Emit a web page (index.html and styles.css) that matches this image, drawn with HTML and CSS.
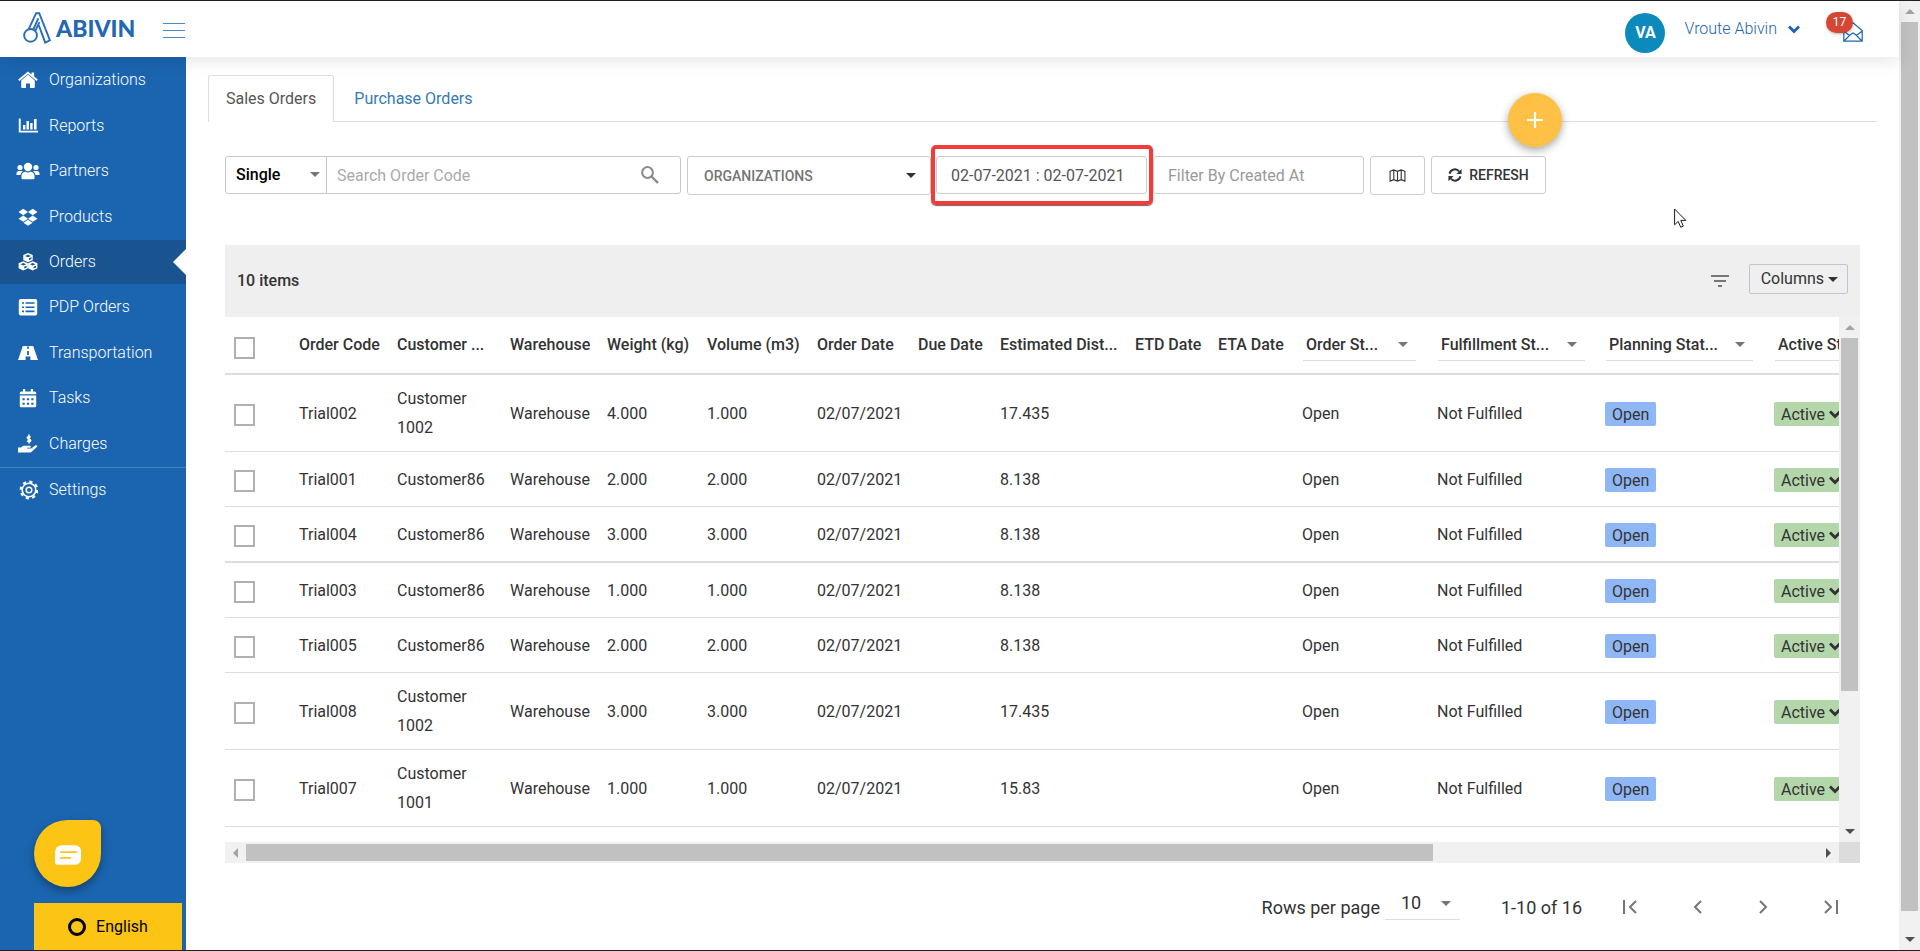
FILE: index.html
```html
<!DOCTYPE html>
<html lang="en">
<head>
<meta charset="utf-8">
<title>Abivin – Sales Orders</title>
<link rel="stylesheet" href="styles.css">
</head>
<body>
<svg class="defs" aria-hidden="true">
  <symbol id="chev" viewBox="0 0 14 10"><path d="M2 2.500l5 5 5-5" fill="none" stroke="currentColor" stroke-width="2.800"/></symbol>
  <symbol id="caret" viewBox="0 0 10 5"><path d="M0 0h10L5 5z" fill="currentColor"/></symbol>
</svg>
<div class="app">
  <div class="page">
    <header class="topbar">
      <a class="logo" href="#" aria-label="Abivin">
        <svg class="logo-mark" viewBox="0 0 30 34" fill="none" stroke="#2a6db8" stroke-width="2"><circle cx="7.800" cy="25.200" r="6.600"/><path d="M6 18.400L13.600 2.200h3.200l11 28-4.800 2.400-6.600-17.800M13 20l4-8.500M10.800 18.900L15.800 7.500"/></svg>
        <span>ABIVIN</span>
      </a>
      <button class="burger" type="button" aria-label="Toggle menu"><i></i><i></i><i></i></button>
      <div class="account">
        <span class="avatar">VA</span>
        <button class="user" type="button">Vroute Abivin <svg class="user-chev"><use href="#chev"/></svg></button>
        <button class="inbox" type="button" aria-label="Inbox">
          <svg viewBox="0 0 20 20" fill="none" stroke="#1b65b0" stroke-width="1.200"><path d="M.8 8.500L10 .8l9.200 7.700v10.700H.8zM.8 9l5.700 4.500M19.200 9l-5.700 4.500M1 19l6.500-6.500L10 11l2.500 1.500L19 19"/></svg>
          <span class="count">17</span>
        </button>
      </div>
    </header>
    <div class="body">
      <nav class="sidebar">
        <div class="group">
          <a href="#"><svg viewBox="0 0 20 20" fill="#fff"><path d="M10 4.800l6.800 5.700V17a1 1 0 0 1-1 1H12v-4.500H8V18H4.200a1 1 0 0 1-1-1v-6.500z"/><path d="M10 1.500l3.500 2.900V2.500h2.600v4.100l3.700 3-1.100 1.400L10 3.900 1.300 11 .2 9.600z"/></svg>Organizations</a>
          <a href="#"><svg viewBox="0 0 20 20" fill="#fff"><path d="M.8 2.500h1.900v12.200H20v1.900H.8z"/><path d="M5 9h2.400v4.500H5zM8.500 5h2.400v8.500H8.500zM12.200 7h2.400v6.500h-2.400zM16 3h2.600v10.500H16z"/></svg>Reports</a>
          <a class="wide" href="#"><svg viewBox="0 0 24 20" fill="#fff"><circle cx="4" cy="6.500" r="2.600"/><circle cx="20" cy="6.500" r="2.600"/><circle cx="12" cy="6" r="4.200"/><path d="M.5 14v-1.500C.5 11 1.500 10 3 10h2.500c.5 0 1 .2 1.400.5-1.500.9-2.300 2.200-2.400 3.500zM23.500 14v-1.500c0-1.500-1-2.500-2.500-2.500h-2.500c-.5 0-1 .2-1.400.5 1.500.9 2.300 2.200 2.400 3.500zM5.500 17v-2c0-2.400 1.700-4.200 4-4.200.8.500 1.600.7 2.500.7s1.700-.2 2.500-.7c2.300 0 4 1.800 4 4.200v2c0 .8-.6 1.300-1.400 1.300H6.900c-.8 0-1.400-.5-1.400-1.300z"/></svg>Partners</a>
          <a href="#"><svg viewBox="0 0 20 20" fill="#fff"><path d="M5.200 1.800L10 5 5.200 8.200.5 5zM14.800 1.800L19.500 5l-4.700 3.200L10 5zM5.200 8.500L10 11.700l-4.800 3.100L.5 11.700zM14.800 8.500l4.700 3.200-4.700 3.100-4.800-3.100zM10 12.800l4.600 3-4.600 3-4.600-3z"/></svg>Products</a>
        </div>
        <a class="active" href="#"><svg viewBox="0 0 20 20"><g fill="#fff"><path d="M10 1l4.700 2v5L10 10.300 5.300 8V3zM5.300 9.300l4.600 2v5l-4.600 2.300L.6 16.300v-5zM14.700 9.300l4.700 2v5l-4.700 2.300-4.600-2.300v-5z"/></g><path d="M7 4l3 1.200L13 4l-3-1.200zM11 8V6.300l2.500-1V7zM2.500 12.200l2.800 1.200 2.800-1.200-2.800-1.100zM12 12.200l2.700 1.200 2.800-1.200-2.800-1.100zM6.200 16.500v-1.800l2.500-1v1.700zM15.600 16.500v-1.800l2.500-1v1.700z" fill="#195490"/></svg>Orders</a>
        <div class="group">
          <a href="#"><svg viewBox="0 0 20 20"><rect x=".8" y="2" width="18.400" height="16.500" rx="2" fill="#fff"/><path d="M4 6h2M4 10.200h2M4 14.400h2M7.500 6h9M7.500 10.200h9M7.500 14.400h9" stroke="#1b65b0" stroke-width="1.600"/></svg>PDP Orders</a>
          <a href="#"><svg viewBox="0 0 20 20"><path d="M4.800 3h10.400L20 17h-7.600v-3.500H7.600V17H0z" fill="#fff"/><path d="M10 3.500v2.200M10 8v4" stroke="#1b65b0" stroke-width="1.800"/></svg>Transportation</a>
          <a href="#"><svg viewBox="0 0 20 20"><path d="M1.800 6.200V5a1.600 1.600 0 0 1 1.600-1.600H5V1h2.200v2.400h5.600V1H15v2.400h1.600A1.600 1.600 0 0 1 18.200 5v1.200zM1.800 7.500h16.400v10.200a1.500 1.500 0 0 1-1.500 1.500H3.300a1.500 1.500 0 0 1-1.500-1.500z" fill="#fff"/><path d="M4.500 11.300h11M4.500 15.700h11" stroke="#1b65b0" stroke-width="2" stroke-dasharray="2.200 2.200"/></svg>Tasks</a>
          <a href="#"><svg viewBox="0 0 20 20" fill="#fff"><path d="M0 13.500h3c1-1.200 2.200-1.800 3.800-1.800h4.900c1.500 0 1.500 2.100 0 2.100H9v.7h4.200l4-3c1.300-1 2.800.3 1.700 1.500L14 17.500c-.8.800-1.500 1-2.500 1H0z"/><path d="M12.600 3.200c-.8-.5-3.300-.9-3.300.5 0 1.500 3.400 1 3.400 2.700 0 1.500-2.700 1.300-3.700.5M11 .5v9" fill="none" stroke="#fff" stroke-width="1.600"/></svg>Charges</a>
        </div>
        <a class="settings" href="#"><svg viewBox="0 0 20 20" fill="none" stroke="#fff"><circle cx="11" cy="10" r="6.800" stroke-width="1.600"/><circle cx="11" cy="10" r="8.300" stroke-width="2.200" stroke-dasharray="3.200 3.319"/><circle cx="11" cy="10" r="2.800" stroke-width="1.500"/></svg>Settings</a>
        <div class="corner">
          <button class="chat" type="button" aria-label="Chat"><svg viewBox="0 0 28 20"><path d="M7 0h14a6 6 0 0 1 6 6v8a6 6 0 0 1-6 6H2a2 2 0 0 1-2-2V7a7 7 0 0 1 7-7z" fill="#fff"/><path d="M6 7h16M6 13h10" stroke="#fcc415" stroke-width="2" stroke-linecap="round"/></svg></button>
          <button class="lang" type="button"><i></i>English</button>
        </div>
      </nav>
      <main class="main">
        <div class="tabs"><a class="tab on" href="#">Sales Orders</a><a class="tab" href="#">Purchase Orders</a></div>
        <button class="fab" type="button" aria-label="Add order"><svg viewBox="0 0 16 16"><path d="M8 0v16M0 8h16" stroke="#fff" stroke-width="2.200"/></svg></button>
        <svg class="pointer" viewBox="0 0 13 20"><path d="M.6 1v15.800l3.600-3.400 2.500 5.800 2.600-1.100-2.500-5.700h5z" fill="#fff" stroke="#1a1a2a"/></svg>
        <form class="filters">
          <div class="search">
            <select aria-label="Search mode"><option>Single</option></select>
            <svg class="mode-caret caret"><use href="#caret"/></svg>
            <input type="text" aria-label="Search Order Code" placeholder="Search Order Code">
            <svg class="glass" viewBox="0 0 18 18" fill="none" stroke="#8a8a8a"><circle cx="6.500" cy="6.500" r="5.400" stroke-width="2"/><path d="M10.500 10.500l6.500 6.500" stroke-width="2.400"/></svg>
          </div>
          <button class="orgs" type="button">ORGANIZATIONS <svg class="caret"><use href="#caret"/></svg></button>
          <div class="marked"><input class="box" type="text" aria-label="Order date" value="02-07-2021 : 02-07-2021"></div>
          <input class="box" type="text" aria-label="Created at" placeholder="Filter By Created At">
          <button class="map" type="button" aria-label="Map"><svg viewBox="0 0 18 14" fill="none" stroke="#333" stroke-width="1.200"><path d="M1 2.500l4-1.500 4 1.500L13 1l4 1.500V13l-4-1.500L9 13l-4-1.500L1 13zM5 1v10.500M9 2.500V13M13 1v10.500"/></svg></button>
          <button class="refresh" type="button"><svg viewBox="0 0 16 16" fill="none" stroke="#333" stroke-width="2.200"><path d="M1.800 6.500A6.200 6.200 0 0 1 12.800 4M14.200 9.500A6.200 6.200 0 0 1 3.200 12"/><path d="M15.500 1v5.800H9.700zM.5 15V9.200h5.800z" fill="#333" stroke="none"/></svg>REFRESH</button>
        </form>
        <section class="grid">
          <div class="toolbar">
            <strong>10 items</strong>
            <button class="sort" type="button" aria-label="Filter"><svg viewBox="0 0 18 12"><path d="M0 1h18M3 6h12M7 11h4" stroke="#757575" stroke-width="2"/></svg></button>
            <button class="columns" type="button">Columns <svg class="caret"><use href="#caret"/></svg></button>
          </div>
          <div class="frame">
            <div class="viewport">
              <table>
                <colgroup><col class="w65"><col class="w98"><col class="w113"><col class="w97"><col class="w100"><col class="w110"><col class="w101"><col class="w82"><col class="w135"><col class="w83"><col class="w84"><col class="w135"><col class="w168"><col class="w169"><col class="w180"></colgroup>
                <thead><tr><th><input type="checkbox" aria-label="Select all"></th><th>Order Code</th><th>Customer ...</th><th>Warehouse</th><th>Weight (kg)</th><th>Volume (m3)</th><th>Order Date</th><th>Due Date</th><th>Estimated Dist...</th><th>ETD Date</th><th>ETA Date</th>
                <th><button class="pick" type="button">Order St...<svg class="caret"><use href="#caret"/></svg></button></th><th><button class="pick" type="button">Fulfillment St...<svg class="caret"><use href="#caret"/></svg></button></th><th><button class="pick" type="button">Planning Stat...<svg class="caret"><use href="#caret"/></svg></button></th><th><button class="pick" type="button">Active Status<svg class="caret"><use href="#caret"/></svg></button></th></tr></thead>
                <tbody>
                <tr><td><input type="checkbox" aria-label="Select Trial002"></td><td>Trial002</td><td>Customer 1002</td><td>Warehouse</td><td>4.000</td><td>1.000</td><td>02/07/2021</td><td></td><td>17.435</td><td></td><td></td><td>Open</td><td>Not Fulfilled</td><td><span class="tag blue">Open</span></td><td><button class="tag green" type="button">Active<svg><use href="#chev"/></svg></button></td></tr>
                <tr><td><input type="checkbox" aria-label="Select Trial001"></td><td>Trial001</td><td>Customer86</td><td>Warehouse</td><td>2.000</td><td>2.000</td><td>02/07/2021</td><td></td><td>8.138</td><td></td><td></td><td>Open</td><td>Not Fulfilled</td><td><span class="tag blue">Open</span></td><td><button class="tag green" type="button">Active<svg><use href="#chev"/></svg></button></td></tr>
                <tr class="ruled"><td><input type="checkbox" aria-label="Select Trial004"></td><td>Trial004</td><td>Customer86</td><td>Warehouse</td><td>3.000</td><td>3.000</td><td>02/07/2021</td><td></td><td>8.138</td><td></td><td></td><td>Open</td><td>Not Fulfilled</td><td><span class="tag blue">Open</span></td><td><button class="tag green" type="button">Active<svg><use href="#chev"/></svg></button></td></tr>
                <tr><td><input type="checkbox" aria-label="Select Trial003"></td><td>Trial003</td><td>Customer86</td><td>Warehouse</td><td>1.000</td><td>1.000</td><td>02/07/2021</td><td></td><td>8.138</td><td></td><td></td><td>Open</td><td>Not Fulfilled</td><td><span class="tag blue">Open</span></td><td><button class="tag green" type="button">Active<svg><use href="#chev"/></svg></button></td></tr>
                <tr><td><input type="checkbox" aria-label="Select Trial005"></td><td>Trial005</td><td>Customer86</td><td>Warehouse</td><td>2.000</td><td>2.000</td><td>02/07/2021</td><td></td><td>8.138</td><td></td><td></td><td>Open</td><td>Not Fulfilled</td><td><span class="tag blue">Open</span></td><td><button class="tag green" type="button">Active<svg><use href="#chev"/></svg></button></td></tr>
                <tr><td><input type="checkbox" aria-label="Select Trial008"></td><td>Trial008</td><td>Customer 1002</td><td>Warehouse</td><td>3.000</td><td>3.000</td><td>02/07/2021</td><td></td><td>17.435</td><td></td><td></td><td>Open</td><td>Not Fulfilled</td><td><span class="tag blue">Open</span></td><td><button class="tag green" type="button">Active<svg><use href="#chev"/></svg></button></td></tr>
                <tr><td><input type="checkbox" aria-label="Select Trial007"></td><td>Trial007</td><td>Customer 1001</td><td>Warehouse</td><td>1.000</td><td>1.000</td><td>02/07/2021</td><td></td><td>15.83</td><td></td><td></td><td>Open</td><td>Not Fulfilled</td><td><span class="tag blue">Open</span></td><td><button class="tag green" type="button">Active<svg><use href="#chev"/></svg></button></td></tr>
                </tbody>
              </table>
            </div>
            <div class="vbar"><i class="arrow up dim"></i><span class="track"><b class="thumb"></b></span><i class="arrow down"></i></div>
            <div class="hbar"><i class="arrow left dim"></i><span class="track"><b class="thumb"></b></span><i class="arrow right"></i></div>
            <div class="joint"></div>
          </div>
        </section>
        <footer class="pager">
          <label for="rows">Rows per page</label>
          <div class="rows"><select id="rows"><option>10</option></select><svg class="caret"><use href="#caret"/></svg></div>
          <span class="range">1-10 of 16</span>
          <div class="steps">
            <button type="button" aria-label="First page"><svg viewBox="0 0 16 18"><path d="M2 2v14M14 3L8 9l6 6"/></svg></button>
            <button type="button" aria-label="Previous page"><svg viewBox="0 0 16 18"><path d="M12 3L6 9l6 6"/></svg></button>
            <button type="button" aria-label="Next page"><svg viewBox="0 0 16 18"><path d="M4 3l6 6-6 6"/></svg></button>
            <button type="button" aria-label="Last page"><svg viewBox="0 0 16 18"><path d="M2 3l6 6-6 6M14 2v14"/></svg></button>
          </div>
        </footer>
      </main>
    </div>
  </div>
  <div class="vbar outer"><i class="arrow up dim"></i><span class="track"><b class="thumb"></b></span><i class="arrow down"></i></div>
</div>
</body>
</html>
```
FILE: styles.css
```css
* { box-sizing: border-box; }
body { margin: 0; font: 16px/24px Roboto, sans-serif; color: #333; background: #fff; }
button, input, select { font: inherit; color: inherit; margin: 0; padding: 0; border: 0; background: none; outline: none; }
select { appearance: none; }
a { text-decoration: none; color: inherit; }
.defs { position: absolute; width: 0; height: 0; }
.caret { width: 10px; height: 5px; flex: none; }

.app { display: flex; height: 100vh; border-top: 1px solid #231f20; border-bottom: 1px solid #231f20; overflow: hidden; }
.page { flex: 1; min-width: 0; display: flex; flex-direction: column; }

.topbar { position: relative; z-index: 2; height: 56px; flex: none; display: flex; align-items: flex-start; background: #fff; box-shadow: 0 4px 16px rgba(0, 0, 0, .1); }
.logo { display: flex; gap: 4px; margin: 10px 0 0 23px; width: 140px; color: #2467b3; font: 900 23px/34px Lato, sans-serif; }
.logo-mark { width: 29px; height: 33px; }
.burger { display: grid; gap: 6px; width: 22px; margin-top: 22px; }
.burger i { height: 1px; background: #4a88cc; }
.account { display: flex; align-items: flex-start; margin-left: auto; padding-right: 36px; }
.avatar { width: 40px; height: 40px; margin-top: 12px; border-radius: 50%; background: #0c8abc; color: #fff; font-weight: 700; line-height: 40px; text-align: center; }
.user { display: flex; align-items: center; gap: 10px; margin: 16px 0 0 19px; color: #1b65b0; font-weight: 300; }
.user-chev { width: 14px; height: 10px; }
.inbox { position: relative; width: 20px; height: 20px; margin: 21px 0 0 42px; }
.inbox svg { display: block; width: 20px; height: 20px; }
.count { position: absolute; left: -17px; top: -10px; width: 27px; height: 21px; border-radius: 11px; background: #d64635; box-shadow: 0 1px 3px rgba(0, 0, 0, .3); color: #fff; font-size: 12px; line-height: 20px; text-align: center; }

.body { flex: 1; min-height: 0; display: flex; }
.sidebar { width: 186px; flex: none; display: flex; flex-direction: column; background: #1b65b0; color: #fff; font-weight: 300; }
.group { display: grid; grid-auto-rows: 1fr; height: 183px; }
.sidebar a { display: flex; align-items: center; gap: 11px; padding-left: 18px; }
.sidebar a svg { width: 20px; height: 20px; flex: none; }
.sidebar .wide { gap: 9px; padding-left: 16px; }
.sidebar .wide svg { width: 24px; }
.sidebar .active { position: relative; height: 44px; background: #195490; }
.active::after { content: ""; position: absolute; right: 0; top: 9px; border: solid transparent; border-width: 13px 13px 13px 0; border-right-color: #fff; }
.settings { height: 45px; border-top: 1px solid #4a84c0; }
.corner { margin-top: auto; padding: 0 4px 0 34px; display: flex; flex-direction: column; gap: 16px; }
.chat { width: 67px; height: 67px; border-radius: 50% 8px 50% 50%; background: #fcc415; box-shadow: 0 4px 8px rgba(0, 0, 0, .35); display: grid; place-items: center; }
.chat svg { width: 27px; height: 20px; margin: 3px 0 0 2px; }
.lang { height: 47px; display: flex; align-items: center; justify-content: center; gap: 10px; background: #fcc415; color: #000; font-weight: 400; }
.lang i { width: 18px; height: 18px; border: 3px solid #000; border-radius: 50%; }

.main { position: relative; flex: 1; min-width: 0; display: flex; flex-direction: column; padding: 18px 22px 0; }
.tabs { display: flex; height: 47px; flex: none; border-bottom: 1px solid #ddd; }
.tab { padding: 12px 20px 0; color: #337ab7; }
.tab.on { height: 47px; padding: 11px 17px 0; border: 1px solid #ddd; border-bottom: 0; border-radius: 3px 3px 0 0; background: #fff; color: #555; }
.fab { position: absolute; z-index: 1; right: 337px; top: 36px; width: 54px; height: 54px; border-radius: 50%; background: #ffc145; box-shadow: 0 3px 8px rgba(0, 0, 0, .35); display: grid; place-items: center; }
.fab svg { width: 16px; height: 16px; }
.pointer { position: absolute; right: 212px; top: 151px; width: 13px; height: 20px; }

.filters { display: flex; align-items: flex-start; gap: 6px; margin: 34px 17px 0; height: 39px; }
.search { position: relative; display: flex; align-items: center; width: 456px; height: 38px; border: 1px solid #c8c8c8; border-radius: 3px; }
.search select { width: 101px; height: 36px; padding-left: 10px; border-right: 1px solid #c8c8c8; color: #000; font-weight: 500; }
.mode-caret { position: absolute; left: 84px; top: 15px; color: #757575; }
.search input { flex: 1; height: 36px; padding-left: 10px; }
.glass { width: 18px; height: 18px; margin-right: 21px; }
::placeholder { color: #999; opacity: 1; }
.search ::placeholder { color: #aaa; }
.orgs { display: flex; align-items: center; justify-content: space-between; width: 244px; height: 39px; padding: 0 14px 0 16px; border: 1px solid #ccc; border-radius: 3px; color: #757575; font-size: 14px; font-weight: 500; }
.orgs .caret { color: #333; }
.box { width: 211px; height: 38px; padding: 0 14px; border: 1px solid #ccc; border-radius: 3px; color: #555; }
.marked { margin: -11px -6px 0 -6px; width: 222px; height: 60px; padding: 7px 1px; border: 4px solid #f43b3b; border-radius: 5px; box-shadow: 0 1px 1px rgba(0, 0, 0, .6); }
.map, .refresh { height: 39px; border: 1px solid #ccc; border-radius: 3px; display: flex; align-items: center; justify-content: center; gap: 7px; }
.map { width: 55px; }
.map svg { width: 17px; height: 13px; }
.refresh { height: 38px; width: 115px; font-size: 14px; font-weight: 500; }
.refresh svg { width: 14px; height: 14px; }

.grid { flex: 1; min-height: 0; display: flex; flex-direction: column; margin: 50px 17px 0; }
.toolbar { height: 72px; flex: none; display: flex; align-items: center; padding: 0 12px; background: #efefef; }
.toolbar strong { flex: 1; font-weight: 500; }
.sort { display: flex; margin-right: 20px; }
.sort svg { width: 18px; height: 12px; }
.columns { display: flex; align-items: center; gap: 4px; height: 30px; margin-bottom: 4px; padding: 0 9px 0 11px; border: 1px solid #bcc6d2; border-radius: 2px; }
.frame { flex: 1; min-height: 0; display: grid; grid-template: 1fr 21px / 1fr 21px; }
.viewport { min-width: 0; min-height: 0; overflow: hidden; }
table { table-layout: fixed; width: 1720px; min-width: 100%; border-collapse: separate; border-spacing: 0; }
.w65 { width: 65px; } .w82 { width: 82px; } .w83 { width: 83px; } .w84 { width: 84px; } .w97 { width: 97px; }
.w98 { width: 98px; } .w100 { width: 100px; } .w101 { width: 101px; } .w110 { width: 110px; } .w113 { width: 113px; }
.w135 { width: 135px; } .w168 { width: 168px; } .w169 { width: 169px; } .w180 { width: 180px; }
th { height: 58px; padding: 0 9px; border-bottom: 2px solid #ddd; text-align: left; font-weight: 500; white-space: nowrap; }
th:first-child { padding-top: 6px; }
td { height: 55px; padding: 9px; border-bottom: 1px solid #ddd; line-height: 29px; }
td:first-child { padding-top: 12px; }
.ruled td { height: 56px; border-bottom-width: 2px; }
th input, td input { appearance: none; display: block; width: 21px; height: 22px; border: 2px solid #b0b0b0; }
.pick { display: flex; align-items: center; justify-content: space-between; width: 113px; height: 32px; margin-left: 1px; padding: 0 8px 0 3px; border-bottom: 1px solid #ddd; font-weight: 500; }
.pick .caret { color: #757575; }
th:nth-child(n+13) .pick { width: 147px; }
.tag { display: inline-flex; align-items: center; height: 24px; padding: 0 7px; border-radius: 2px; vertical-align: middle; }
.blue { background: #8fb6f5; }
.green { background: #b3d6aa; }
.green svg { width: 14px; height: 10px; margin-left: 3px; }

.vbar, .hbar { display: flex; align-items: center; background: #f1f1f1; }
.vbar { flex-direction: column; width: 21px; flex: none; }
.track { flex: 1; }
.vbar .track { width: 17px; }
.hbar .track { height: 17px; }
.thumb { display: block; width: 100%; height: 100%; background: #c1c1c1; }
.vbar .thumb { height: 73%; }
.outer .thumb { height: 98%; }
.hbar .thumb { width: 75.5%; height: 100%; }
.arrow { width: 21px; height: 21px; display: grid; place-items: center; color: #505050; }
.arrow.dim { color: #a3a3a3; }
.arrow::before { content: ""; border: 5px solid transparent; }
.up::before { border-top: 0; border-bottom-color: currentColor; }
.down::before { border-bottom: 0; border-top-color: currentColor; }
.left::before { border-left: 0; border-right-color: currentColor; }
.right::before { border-right: 0; border-left-color: currentColor; }
.joint { background: #dcdcdc; }

.pager { height: 87px; flex: none; display: flex; justify-content: flex-end; align-items: center; padding-right: 38px; font-size: 18px; }
.pager label, .range { padding-top: 2px; }
.rows { display: flex; align-items: center; width: 75px; height: 32px; margin: 0 0 6px 5px; padding-right: 9px; border-bottom: 1px solid #ddd; }
.rows select { flex: 1; padding-left: 16px; }
.rows .caret { color: #757575; }
.range { margin-left: 41px; }
.steps { display: flex; gap: 51px; margin-left: 40px; }
.steps button { display: flex; }
.steps svg { width: 16px; height: 18px; fill: none; stroke: #757575; stroke-width: 2; }
```
